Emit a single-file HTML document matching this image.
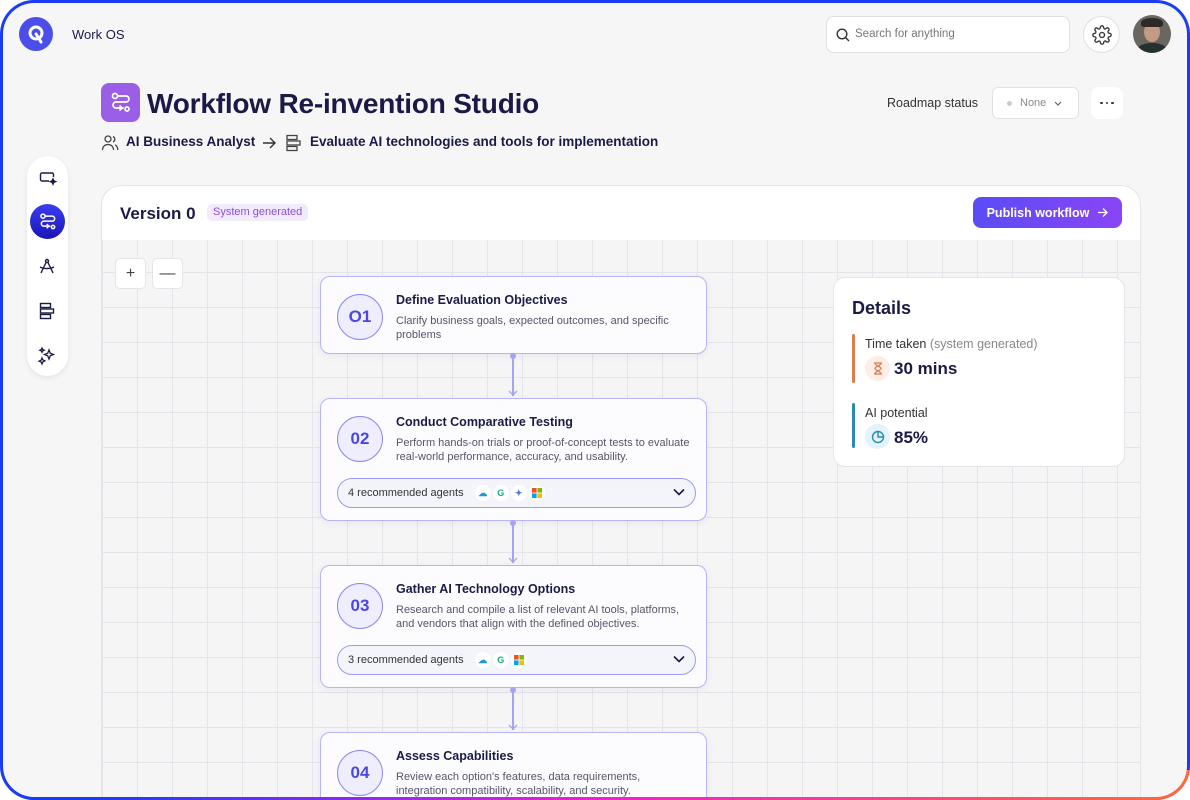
<!DOCTYPE html>
<html><head><meta charset="utf-8"><style>
*{box-sizing:border-box;margin:0;padding:0}
html,body{width:1190px;height:800px;overflow:hidden;background:#fff;font-family:"Liberation Sans",sans-serif;color:#1b1a46}
.frame{position:absolute;left:0;top:0;width:1190px;height:800px;border-radius:34px;background:#1a3cf5;overflow:hidden}
.band{position:absolute;left:0;bottom:0;width:1190px;height:30px;background:linear-gradient(90deg,#1a3cf5 0%,#1a3cf5 8%,#8a2cf0 30%,#f020d0 50%,#ff6a3a 100%)}
.inner{position:absolute;left:3px;top:3px;width:1184px;height:794px;border-radius:31px;background:#f6f6f6;overflow:hidden}
.wrap{position:absolute;left:-3px;top:-3px;width:1190px;height:800px}
.abs{position:absolute}
.grid{position:absolute;left:101px;top:240px;width:1040px;height:560px;border-left:1px solid #e4e4ea;border-right:1px solid #e4e4ea;
background-image:linear-gradient(#e4e4ea 1px,transparent 1px),linear-gradient(90deg,#e4e4ea 1px,transparent 1px);background-size:35px 35px;background-position:0 -3px,0 0;background-color:#f5f5f6}
.card{position:absolute;left:320px;width:387px;background:#fcfcff;border:1px solid #b7b4f7;border-radius:10px;box-shadow:0 2px 8px rgba(80,80,160,.08)}
.num{position:absolute;left:16px;top:17px;width:46px;height:46px;border-radius:50%;border:1px solid #8c88f5;background:#eeeefe;color:#4b47e0;font-weight:bold;font-size:17px;display:flex;align-items:center;justify-content:center}
.ct{position:absolute;left:75px;top:16px;font-size:12.5px;font-weight:bold;color:#1b1a46}
.cd{position:absolute;left:75px;top:37px;font-size:11px;line-height:14px;color:#55556a;width:296px}
.ag{position:absolute;left:16px;width:359px;height:30px;border:1px solid #9d99f5;border-radius:15px;background:#f4f4fb;font-size:11px;color:#333;padding-left:10px;display:flex;align-items:center}
.ic{width:16px;height:16px;border-radius:50%;background:#fff;display:inline-flex;align-items:center;justify-content:center;margin-left:2px;font-size:9px;font-weight:bold}
.conn{position:absolute;left:512px;width:2px;background:#a6a3f3}
.dot{position:absolute;left:510px;width:6px;height:6px;border-radius:50%;background:#a6a3f3}
.sb{position:absolute;left:27px;top:156px;width:41px;height:220px;background:#fff;border-radius:21px;box-shadow:0 2px 6px rgba(0,0,0,.08)}
.chev{position:absolute;right:10px;top:9px}
</style></head><body>
<div class="frame"><div class="band"></div>
<div class="inner"><div class="wrap">
<!-- top bar -->
<div class="abs" style="left:19px;top:17px;width:34px;height:34px;border-radius:50%;background:#4b4ee8;display:flex;align-items:center;justify-content:center">
<svg width="18" height="20" viewBox="0 0 18 20"><circle cx="9" cy="9" r="6" fill="none" stroke="#fff" stroke-width="3"/><path d="M9 10 L14 18" stroke="#fff" stroke-width="3" stroke-linecap="round"/></svg></div>
<div class="abs" style="left:72px;top:27px;font-size:13px;color:#1b1a46">Work OS</div>
<div class="abs" style="left:826px;top:16px;width:244px;height:37px;background:#fff;border:1px solid #e0e0e6;border-radius:8px">
<svg class="abs" style="left:9px;top:11px" width="14" height="14" viewBox="0 0 14 14"><circle cx="6" cy="6" r="4.8" fill="none" stroke="#333" stroke-width="1.4"/><path d="M9.5 9.5L13 13" stroke="#333" stroke-width="1.4"/></svg>
<div class="abs" style="left:28px;top:11px;font-size:11.5px;color:#777">Search for anything</div></div>
<div class="abs" style="left:1083px;top:16px;width:37px;height:37px;border-radius:50%;background:#fff;border:1px solid #e0e0e6;display:flex;align-items:center;justify-content:center">
<svg width="20" height="20" viewBox="0 0 24 24" fill="none" stroke="#333" stroke-width="1.6"><circle cx="12" cy="12" r="3"/><path d="M19.4 15a1.7 1.7 0 0 0 .3 1.8l.1.1a2 2 0 1 1-2.8 2.8l-.1-.1a1.7 1.7 0 0 0-1.8-.3 1.7 1.7 0 0 0-1 1.5V21a2 2 0 1 1-4 0v-.1a1.7 1.7 0 0 0-1.1-1.5 1.7 1.7 0 0 0-1.8.3l-.1.1a2 2 0 1 1-2.8-2.8l.1-.1a1.7 1.7 0 0 0 .3-1.8 1.7 1.7 0 0 0-1.5-1H3a2 2 0 1 1 0-4h.1a1.7 1.7 0 0 0 1.5-1.1 1.7 1.7 0 0 0-.3-1.8l-.1-.1a2 2 0 1 1 2.8-2.8l.1.1a1.7 1.7 0 0 0 1.8.3H9a1.7 1.7 0 0 0 1-1.5V3a2 2 0 1 1 4 0v.1a1.7 1.7 0 0 0 1 1.5 1.7 1.7 0 0 0 1.8-.3l.1-.1a2 2 0 1 1 2.8 2.8l-.1.1a1.7 1.7 0 0 0-.3 1.8V9a1.7 1.7 0 0 0 1.5 1H21a2 2 0 1 1 0 4h-.1a1.7 1.7 0 0 0-1.5 1z"/></svg></div>
<div class="abs" style="left:1133px;top:15px;width:38px;height:38px;border-radius:50%;overflow:hidden;background:#6a6660">
<div class="abs" style="left:11px;top:7px;width:16px;height:20px;border-radius:50%;background:#c49a84"></div>
<div class="abs" style="left:8px;top:3px;width:22px;height:9px;border-radius:50% 50% 20% 20%;background:#2e2a26"></div>
<div class="abs" style="left:4px;top:28px;width:30px;height:14px;border-radius:50% 50% 0 0;background:#26302f"></div></div>

<!-- title -->
<div class="abs" style="left:101px;top:83px;width:39px;height:39px;border-radius:8px;background:#9b5ee6;display:flex;align-items:center;justify-content:center">
<svg width="24" height="24" viewBox="0 0 24 24" fill="none" stroke="#fff" stroke-width="1.7" stroke-linecap="round"><circle cx="6" cy="5" r="2.5"/><path d="M9 5h8a3 3 0 0 1 0 6H7a3 3 0 0 0 0 6h7"/><path d="M11 15l2 2-2 2"/><circle cx="18" cy="18" r="2"/></svg></div>
<div class="abs" style="left:147px;top:88px;font-size:28px;font-weight:bold;color:#1b1a46;letter-spacing:-.2px">Workflow Re-invention Studio</div>
<svg class="abs" style="left:101px;top:134px" width="18" height="18" viewBox="0 0 18 18" fill="none" stroke="#444" stroke-width="1.3"><circle cx="7" cy="5" r="3"/><path d="M1.5 16c0-3.5 2.5-5.5 5.5-5.5s5.5 2 5.5 5.5"/><path d="M12 2.5a3 3 0 0 1 0 5.5M14 10.8c1.7.7 2.7 2.5 2.7 5.2"/></svg>
<div class="abs" style="left:126px;top:134px;font-size:13.5px;font-weight:bold;color:#1b1a46">AI Business Analyst</div>
<svg class="abs" style="left:262px;top:137px" width="15" height="12" viewBox="0 0 15 12" fill="none" stroke="#333" stroke-width="1.4"><path d="M1 6h12M8 1l5 5-5 5"/></svg>
<svg class="abs" style="left:285px;top:134px" width="17" height="18" viewBox="0 0 17 18" fill="none" stroke="#444" stroke-width="1.3"><rect x="2" y="1.5" width="10" height="4"/><rect x="2" y="7" width="13" height="4"/><rect x="2" y="12.5" width="10" height="4"/></svg>
<div class="abs" style="left:310px;top:134px;font-size:13.5px;font-weight:bold;color:#1b1a46">Evaluate AI technologies and tools for implementation</div>

<div class="abs" style="left:887px;top:96px;font-size:12.5px;color:#333">Roadmap status</div>
<div class="abs" style="left:992px;top:87px;width:87px;height:32px;background:#fff;border:1px solid #e0e0e6;border-radius:6px;font-size:11px;color:#888;display:flex;align-items:center;padding-left:14px"><span style="width:5px;height:5px;border-radius:50%;background:#ccc;display:inline-block;margin-right:8px"></span>None <svg style="margin-left:8px" width="8" height="5" viewBox="0 0 8 5" fill="none" stroke="#666" stroke-width="1.2"><path d="M1 1l3 3 3-3"/></svg></div>
<div class="abs" style="left:1091px;top:87px;width:32px;height:32px;background:#fff;border-radius:8px;display:flex;align-items:center;justify-content:center;gap:3px"><i style="width:2.5px;height:2.5px;background:#333;border-radius:50%"></i><i style="width:2.5px;height:2.5px;background:#333;border-radius:50%"></i><i style="width:2.5px;height:2.5px;background:#333;border-radius:50%"></i></div>

<!-- sidebar -->
<div class="sb"></div>
<svg class="abs" style="left:39px;top:169px" width="18" height="18" viewBox="0 0 18 18" fill="none" stroke="#1b1a46" stroke-width="1.4"><path d="M10 12H3a1.5 1.5 0 0 1-1.5-1.5v-5A1.5 1.5 0 0 1 3 4h10a1.5 1.5 0 0 1 1.5 1.5V8"/><path d="M14 10l.8 1.8 1.8.8-1.8.8-.8 1.8-.8-1.8-1.8-.8 1.8-.8z" fill="#1b1a46"/></svg>
<div class="abs" style="left:30px;top:204px;width:35px;height:35px;border-radius:50%;background:linear-gradient(#3a3ef0,#1a14b8);display:flex;align-items:center;justify-content:center">
<svg width="20" height="20" viewBox="0 0 24 24" fill="none" stroke="#fff" stroke-width="1.8" stroke-linecap="round"><circle cx="6" cy="5" r="2.5"/><path d="M9 5h8a3 3 0 0 1 0 6H7a3 3 0 0 0 0 6h7"/><path d="M11 15l2 2-2 2"/><circle cx="18" cy="18" r="2"/></svg></div>
<svg class="abs" style="left:38px;top:257px" width="18" height="18" viewBox="0 0 18 18" fill="none" stroke="#1b1a46" stroke-width="1.4"><circle cx="9" cy="4" r="1.5"/><path d="M8 5.5L3 16M10 5.5L15 16M2 10c4 2 10 2 14 0"/></svg>
<svg class="abs" style="left:38px;top:302px" width="18" height="18" viewBox="0 0 17 18" fill="none" stroke="#1b1a46" stroke-width="1.4"><rect x="2" y="1.5" width="10" height="4"/><rect x="2" y="7" width="13" height="4"/><rect x="2" y="12.5" width="10" height="4"/></svg>
<svg class="abs" style="left:37px;top:346px" width="20" height="20" viewBox="0 0 20 20" fill="none" stroke="#1b1a46" stroke-width="1.3"><path d="M12 4l1.3 3.2 3.2 1.3-3.2 1.3L12 13l-1.3-3.2L7.5 8.5l3.2-1.3z"/><path d="M5 2l.7 1.5 1.5.7-1.5.7L5 6.4l-.7-1.5-1.5-.7 1.5-.7z"/><path d="M5 12l.9 2 2 .9-2 .9L5 18l-.9-2-2-.9 2-.9z"/></svg>

<!-- version header -->
<div class="abs" style="left:101px;top:185px;width:1040px;height:56px;background:#fff;border:1px solid #e4e4ea;border-radius:20px 20px 0 0"></div>
<div class="grid"></div>
<div class="abs" style="left:120px;top:204px;font-size:17px;font-weight:bold;color:#1b1a46">Version 0</div>
<div class="abs" style="left:207px;top:204px;height:17px;padding:0 6px;background:#f2eafd;border-radius:5px;font-size:11px;color:#8e4fdb;line-height:17px">System generated</div>
<div class="abs" style="left:973px;top:197px;width:149px;height:31px;border-radius:8px;background:linear-gradient(90deg,#5a4cf6,#8a45f5);color:#fff;font-size:12.5px;font-weight:bold;display:flex;align-items:center;justify-content:center">Publish workflow<svg style="margin-left:9px" width="10" height="9" viewBox="0 0 10 9" fill="none" stroke="#fff" stroke-width="1.3"><path d="M0 4.5h9M5 0.5l4 4-4 4"/></svg></div>

<div class="abs" style="left:115px;top:258px;width:31px;height:31px;background:#fff;border:1px solid #e4e4ea;border-radius:5px;text-align:center;line-height:29px;font-size:16px;color:#444">+</div>
<div class="abs" style="left:152px;top:258px;width:31px;height:31px;background:#fff;border:1px solid #e4e4ea;border-radius:5px;text-align:center;line-height:29px;font-size:16px;color:#444">—</div>

<!-- cards -->
<div class="card" style="top:276px;height:78px"><div class="num">O1</div><div class="ct">Define Evaluation Objectives</div><div class="cd">Clarify business goals, expected outcomes, and specific problems</div></div>
<div class="dot" style="top:353px"></div><div class="conn" style="top:356px;height:40px"></div>
<svg class="abs" style="left:508px;top:390px" width="10" height="6" viewBox="0 0 10 6" fill="none" stroke="#a6a3f3" stroke-width="1.3"><path d="M1 1l4 4 4-4"/></svg>
<div class="card" style="top:398px;height:123px"><div class="num">02</div><div class="ct">Conduct Comparative Testing</div><div class="cd">Perform hands-on trials or proof-of-concept tests to evaluate real-world performance, accuracy, and usability.</div>
<div class="ag" style="top:79px">4 recommended agents&nbsp;&nbsp;&nbsp;<span class="ic" style="color:#1a9be0">☁</span><span class="ic" style="color:#16b07a">G</span><span class="ic" style="color:#4b7af0">✦</span><span class="ic"><svg width="10" height="10"><rect width="4.6" height="4.6" fill="#f25022"/><rect x="5.4" width="4.6" height="4.6" fill="#7fba00"/><rect y="5.4" width="4.6" height="4.6" fill="#00a4ef"/><rect x="5.4" y="5.4" width="4.6" height="4.6" fill="#ffb900"/></svg></span><svg class="chev" width="12" height="8" viewBox="0 0 12 8" fill="none" stroke="#1b1a46" stroke-width="1.6"><path d="M1 1.5l5 5 5-5"/></svg></div></div>
<div class="dot" style="top:520px"></div><div class="conn" style="top:523px;height:40px"></div>
<svg class="abs" style="left:508px;top:557px" width="10" height="6" viewBox="0 0 10 6" fill="none" stroke="#a6a3f3" stroke-width="1.3"><path d="M1 1l4 4 4-4"/></svg>
<div class="card" style="top:565px;height:123px"><div class="num">03</div><div class="ct">Gather AI Technology Options</div><div class="cd">Research and compile a list of relevant AI tools, platforms, and vendors that align with the defined objectives.</div>
<div class="ag" style="top:79px">3 recommended agents&nbsp;&nbsp;&nbsp;<span class="ic" style="color:#1a9be0">☁</span><span class="ic" style="color:#16b07a">G</span><span class="ic"><svg width="10" height="10"><rect width="4.6" height="4.6" fill="#f25022"/><rect x="5.4" width="4.6" height="4.6" fill="#7fba00"/><rect y="5.4" width="4.6" height="4.6" fill="#00a4ef"/><rect x="5.4" y="5.4" width="4.6" height="4.6" fill="#ffb900"/></svg></span><svg class="chev" width="12" height="8" viewBox="0 0 12 8" fill="none" stroke="#1b1a46" stroke-width="1.6"><path d="M1 1.5l5 5 5-5"/></svg></div></div>
<div class="dot" style="top:687px"></div><div class="conn" style="top:690px;height:40px"></div>
<svg class="abs" style="left:508px;top:724px" width="10" height="6" viewBox="0 0 10 6" fill="none" stroke="#a6a3f3" stroke-width="1.3"><path d="M1 1l4 4 4-4"/></svg>
<div class="card" style="top:732px;height:100px"><div class="num">04</div><div class="ct">Assess Capabilities</div><div class="cd" style="width:290px">Review each option's features, data requirements, integration compatibility, scalability, and security.</div></div>

<!-- details -->
<div class="abs" style="left:833px;top:277px;width:292px;height:190px;background:#fff;border:1px solid #e4e4ea;border-radius:12px">
<div class="abs" style="left:18px;top:20px;font-size:18px;font-weight:bold;color:#1b1a46">Details</div>
<div class="abs" style="left:18px;top:56px;width:3px;height:49px;background:#e07a4a;border-radius:2px"></div>
<div class="abs" style="left:31px;top:59px;font-size:12.5px;color:#333">Time taken <span style="color:#888">(system generated)</span></div>
<div class="abs" style="left:31px;top:78px;width:25px;height:25px;border-radius:50%;background:#fdeee8;display:flex;align-items:center;justify-content:center"><svg width="10" height="13" viewBox="0 0 10 13" fill="none" stroke="#e07a4a" stroke-width="1.3"><path d="M1 1h8M1 12h8M2 1c0 3 6 3.5 6 5.5S2 9 2 12M8 1c0 3-6 3.5-6 5.5S8 9 8 12"/></svg></div>
<div class="abs" style="left:60px;top:81px;font-size:17px;font-weight:bold;color:#1b1a46">30 mins</div>
<div class="abs" style="left:18px;top:125px;width:3px;height:45px;background:#2a8ab0;border-radius:2px"></div>
<div class="abs" style="left:31px;top:128px;font-size:12.5px;color:#333">AI potential</div>
<div class="abs" style="left:31px;top:146px;width:25px;height:25px;border-radius:50%;background:#e3f3fb;display:flex;align-items:center;justify-content:center"><svg width="14" height="14" viewBox="0 0 14 14" fill="none" stroke="#2a8ab0" stroke-width="1.4"><circle cx="7" cy="7" r="5.5"/><path d="M7 1.5V7h5.5"/></svg></div>
<div class="abs" style="left:60px;top:150px;font-size:17px;font-weight:bold;color:#1b1a46">85%</div>
</div>
</div></div></div>
</body></html>
